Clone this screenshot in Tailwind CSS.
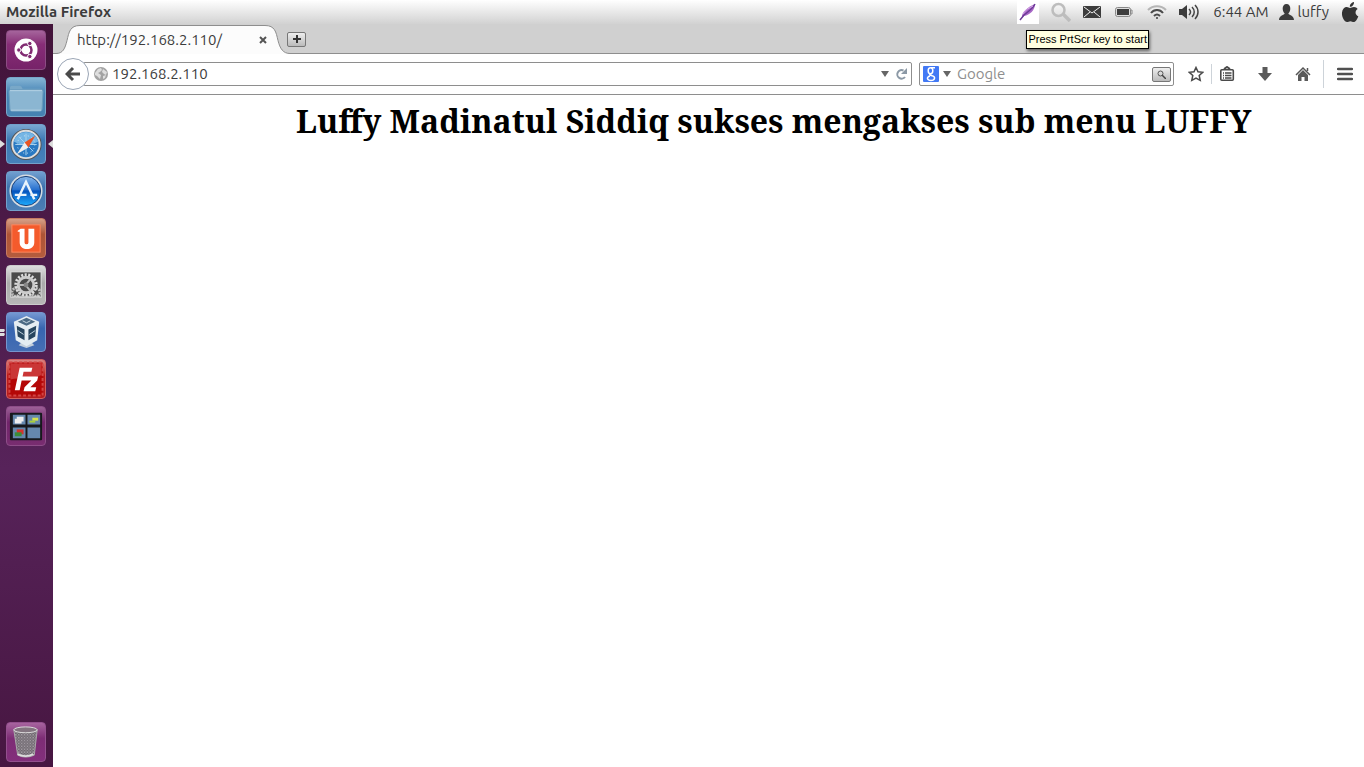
<!DOCTYPE html>
<html lang="en">
<head>
    <meta charset="utf-8">
    <title>http://192.168.2.110/</title>
    <script src="https://cdn.jsdelivr.net/npm/@tailwindcss/browser@4"></script>
</head>
<body class="flex h-screen flex-col overflow-hidden bg-white font-['Ubuntu','Open_Sans',sans-serif] text-[15px] leading-6 text-[#3c3c3c]">

    <!-- Top panel -->
    <header class="relative flex h-6 shrink-0 items-center justify-between bg-linear-to-b from-white to-[#d2d2d2] pr-[5px] pl-1.5">
        <span class="font-bold">Mozilla Firefox</span>
        <div class="flex h-6 items-center">
            <button type="button" aria-label="Screenshot" class="mr-3 h-6 w-[22px] bg-white">
                <svg class="h-6 w-[22px]" viewBox="0 0 22 24">
                    <path d="M5 18C4 12 11 7 18 4c0 6-5 11-11 12z" fill="#a868c6"/>
                    <path d="M3 20L7 15C11 12 16 8 18 4" stroke="#6b3a96" stroke-width="1.500" fill="none"/>
                    <path d="M6 14c2-4 6-6 10-8" stroke="#d6a9e8" fill="none"/>
                </svg>
            </button>
            <button type="button" aria-label="Search" class="mr-3">
                <svg class="size-5" viewBox="0 0 20 20" fill="none" stroke="#bdbdbd">
                    <circle cx="7.500" cy="8" r="6" stroke-width="2.500"/>
                    <path d="M12 12l7 7" stroke-width="3.500"/>
                </svg>
            </button>
            <button type="button" aria-label="Messages" class="mr-3.5">
                <svg class="h-3 w-[18px]" viewBox="0 0 18 12">
                    <rect width="18" height="12" rx="1" fill="#3c3c3c"/>
                    <path d="M1 1l8 6 8-6M1 11l6-5M17 11l-6-5" stroke="#eee" fill="none"/>
                </svg>
            </button>
            <button type="button" aria-label="Battery" class="mr-3.5">
                <svg class="h-2.5 w-[18px]" viewBox="0 0 18 10">
                    <rect x=".5" y=".5" width="15" height="9" rx="2" fill="#ddd" stroke="#888"/>
                    <rect x="2" y="2" width="12" height="6" fill="#3c3c3c"/>
                    <path d="M16 3h1v4h-1" stroke="#888" fill="none"/>
                </svg>
            </button>
            <button type="button" aria-label="Network" class="mr-3">
                <svg class="h-4 w-5" viewBox="0 0 20 16" fill="none" stroke-width="2">
                    <path d="M1 6c5-5 13-5 18 0" stroke="#b5b5b5"/>
                    <path d="M4 9c3-4 9-4 12 0M7 12c2-2 4-2 6 0" stroke="#4a4a4a"/>
                    <circle cx="10" cy="14" r="1" fill="#3c3c3c"/>
                </svg>
            </button>
            <button type="button" aria-label="Volume" class="mr-3.5">
                <svg class="h-4 w-5" viewBox="0 0 20 16">
                    <path d="M0 5h3l5-4v14l-5-4H0z" fill="#3c3c3c"/>
                    <path d="M10 5c2 2 2 4 0 6M13 3c3 3 3 7 0 10M16 1c4 4 4 10 0 14" fill="none" stroke="#444" stroke-width="1.500"/>
                </svg>
            </button>
            <span class="mr-2.5">6:44 AM</span>
            <svg class="mr-1 h-4 w-[15px]" viewBox="0 0 15 16" fill="#3c3c3c">
                <path d="M7.500 0C10 0 11.500 2 11.300 5c-.2 2-1 3.500-2 4.500.2 1.500 5.700 1.800 5.700 6.500H0c0-4.700 5.500-5 5.700-6.500-1-1-1.800-2.500-2-4.500C3.500 2 5 0 7.500 0z"/>
            </svg>
            <span class="mr-3">luffy</span>
            <svg class="h-5 w-[18px]" viewBox="0 0 18 20" fill="#333">
                <path d="M13 0c.2 2.500-1.800 5-4.200 4.800C8.600 2.500 10.700.3 13 0z"/>
                <path d="M9 6c1 0 2-1 4-1 1.500 0 2.900.8 3.700 2-3.200 2-2.600 6 .6 7.200C16.500 17 14.500 20 12.700 20c-1.300 0-1.800-.8-3.300-.8S7.300 20 6 20c-2.500 0-5.500-5-5-9.500C1.300 7 3.500 5 5.700 5 7.200 5 8 6 9 6z"/>
            </svg>
        </div>
        <div role="tooltip" class="absolute top-[30px] right-[215px] z-10 border border-black bg-[#ffffe1] px-px font-['Liberation_Sans',sans-serif] text-[11px] leading-[17px] whitespace-nowrap text-black shadow-[1px_2px_3px_#0008]">Press PrtScr key to start</div>
    </header>

    <div class="flex min-h-0 flex-1">
        <!-- Launcher -->
        <nav aria-label="Launcher" class="flex w-[53px] shrink-0 flex-col gap-[7px] bg-linear-to-b from-[#421339] via-[#57235a] via-60% to-[#471641] px-1.5 pt-1.5 pb-[5px]">
            <button type="button" aria-label="Dash home" class="size-10 rounded border border-[#8c4c83] bg-linear-to-b from-[#a5649c] via-[#872d77] via-35% to-[#772369]">
                <svg class="mx-auto size-6" viewBox="0 0 24 24">
                    <circle cx="12" cy="12" r="11.500" fill="#fff"/>
                    <circle cx="12" cy="12" r="5.500" fill="none" stroke="#812b72" stroke-width="2.500"/>
                    <path d="M12 12H4M12 12l4-7M12 12l4 7" stroke="#fff" stroke-width="1"/>
                    <g fill="#812b72" stroke="#fff"><circle cx="4.800" cy="12" r="2.200"/><circle cx="15.800" cy="5.500" r="2.200"/><circle cx="15.800" cy="18.500" r="2.200"/></g>
                </svg>
            </button>
            <button type="button" aria-label="Files" class="size-10 rounded border border-[#77a6c9] bg-linear-to-b from-[#85b5d5] via-[#4684b5] via-40% to-[#4682b2]">
                <svg class="size-[38px]" viewBox="0 0 39 39">
                    <path d="M3 10q0-2 2-2h8q2 0 3 3h18q2 0 2 2v5H3z" fill="#79a8c8"/>
                    <path d="M2 14q0-2 2-2h31q2 0 2 2l-1 18q0 2-2 2H5q-2 0-2-2z" fill="#8bb6d2" stroke="#6a9bbd"/>
                    <path d="M3 13h33M4 33h31" stroke="#b5d3e4"/>
                </svg>
            </button>
            <!-- the arrows mark the running, focused app -->
            <div class="-mx-1.5 flex items-center">
                <svg class="mr-px h-2 w-[5px]" viewBox="0 0 5 8"><path d="M0 0l5 4-5 4z" fill="#ddd"/></svg>
                <button type="button" aria-label="Browser" class="size-10 rounded border border-[#72a1cb] bg-linear-to-b from-[#79a7d1] via-[#3c79b4] via-40% to-[#4681b9]">
                    <svg class="size-[38px]" viewBox="0 0 39 39">
                        <circle cx="19.500" cy="20" r="14.500" fill="#347fc8" stroke="#555" stroke-width="3"/>
                        <circle cx="19.500" cy="20" r="14" fill="#2979c2" stroke="#ddd" stroke-width="2"/>
                        <path d="M7 17c4-13 21-13 25 0-8 5-17 5-25 0z" fill="#75b5e4"/>
                        <circle cx="19.500" cy="20" r="9" fill="none" stroke="#cde5f4" stroke-dasharray="1 3"/>
                        <path d="M19.500 9v22M8.500 20h22M12 12l15 15" stroke="#a9d4ef"/>
                        <path d="M29 11L22 23l-4-5z" fill="#e95421"/>
                        <path d="M10 30l8-12 4 5z" fill="#eee"/>
                    </svg>
                </button>
                <svg class="ml-auto h-2 w-[5px]" viewBox="0 0 5 8"><path d="M5 0L0 4l5 4z" fill="#ddd"/></svg>
            </div>
            <button type="button" aria-label="App store" class="size-10 rounded border border-[#72a1cb] bg-linear-to-b from-[#719fd0] via-[#3e73ad] via-40% to-[#4b7eb5]">
                <svg class="size-[38px]" viewBox="0 0 39 39">
                    <defs>
                        <linearGradient id="store" x2="0" y2="1">
                            <stop offset="0" stop-color="#8fbdec"/>
                            <stop offset=".45" stop-color="#2a72cf"/>
                            <stop offset=".5" stop-color="#0553bd"/>
                            <stop offset="1" stop-color="#22b0ff"/>
                        </linearGradient>
                    </defs>
                    <circle cx="19.500" cy="19.500" r="16" fill="url(#store)" stroke="#d6dce2" stroke-width="2"/>
                    <circle cx="19.500" cy="19.500" r="15" fill="none" stroke="#173d75"/>
                    <path d="M11 28l8.500-18L28 28M8 23.500h12M24 23.500h7" fill="none" stroke="#e9f3fc" stroke-width="2.500"/>
                </svg>
            </button>
            <button type="button" aria-label="Ubuntu One" class="size-10 rounded border border-[#c67a61] bg-linear-to-b from-[#d6a087] via-[#ae5436] via-40% to-[#b45c3d]">
                <svg class="size-[38px]" viewBox="0 0 39 39">
                    <rect x="5" y="6" width="29" height="28" fill="#f45b2c" stroke="#ff8960"/>
                    <path d="M11 12l3-2h4v14q0 2 2 2t2-2V10h6v14c0 9-15 9-15 0V13h-2z" fill="#fff"/>
                </svg>
            </button>
            <button type="button" aria-label="System settings" class="size-10 rounded border border-[#ccc] bg-linear-to-b from-[#ddd] via-[#aaa] via-45% to-[#b7b7b7]">
                <svg class="size-[38px]" viewBox="0 0 39 39">
                    <rect x="4" y="6" width="31" height="26" fill="#4b4b4b" stroke="#e4e4e4"/>
                    <g fill="none" stroke="#bbb">
                        <circle cx="9" cy="27" r="4" stroke-width="3" stroke-dasharray="2 1"/>
                        <circle cx="30" cy="27" r="4" stroke-width="3" stroke-dasharray="2 1"/>
                        <circle cx="19.500" cy="19.500" r="10" stroke="#ddd" stroke-width="4" stroke-dasharray="2 1.500"/>
                        <circle cx="19.500" cy="19.500" r="8" stroke="#ccc" stroke-width="3"/>
                        <path d="M12 19.500h7l5-6M19 19.500l5 6" stroke-width="2"/>
                    </g>
                    <circle cx="19.500" cy="19.500" r="2.500" fill="#888"/>
                    <path d="M5 31h29" stroke="#ddd"/>
                </svg>
            </button>
            <!-- two bars: two windows open -->
            <div class="-ml-1.5 flex items-center gap-px">
                <svg class="h-[7px] w-[5px]" viewBox="0 0 5 7"><path d="M0 0h4l1 1-1 2H0zM0 4h4l1 1-1 2H0z" fill="#ddd"/></svg>
                <button type="button" aria-label="VirtualBox" class="size-10 rounded border border-[#7595cd] bg-linear-to-b from-[#7598d2] via-[#3765af] via-40% to-[#456eb4]">
                    <svg class="size-[38px]" viewBox="0 0 39 39">
                        <path d="M15 30l5-2 5 2 3 3-8 3-8-3z" fill="#c4cfdb"/>
                        <path d="M20 3l13 6-2 19-11 6-11-6L7 9z" fill="#e5edf2"/>
                        <path d="M20 5l9 4-9 4-9-4z" fill="#4b6983"/>
                        <path d="M10 13l8 4v11l-7-4zM30 13l-8 4v11l7-4z" fill="#28465f"/>
                        <path d="M16 8l4 2 4-2M11 18l6 4M23 22l6-4" stroke="#c6d8e2" fill="none"/>
                    </svg>
                </button>
            </div>
            <button type="button" aria-label="FileZilla" class="size-10 rounded border border-[#d06060] bg-linear-to-b from-[#d88484] via-[#bd1a1a] via-40% to-[#b51e1e]">
                <svg class="size-[38px]" viewBox="0 0 39 39">
                    <rect x="2.500" y="2.500" width="34" height="34" fill="#b40707" stroke="#d24545" stroke-width="2" stroke-dasharray="3 2"/>
                    <path d="M3.500 3.500h32v12C27 20 13 18 3.500 20z" fill="#ca3636"/>
                    <path d="M8 31l5-23h13l-1 4h-8l-1 5h6l-1 4h-6l-2 10zM20 17h12l-1 4-7 7h6l-1 4H17l1-4 7-7h-6z" fill="#fff"/>
                </svg>
            </button>
            <button type="button" aria-label="Workspace switcher" class="size-10 rounded border border-[#8d4d88] bg-linear-to-b from-[#9c6097] via-[#71246b] via-40% to-[#782d70]">
                <svg class="size-[38px]" viewBox="0 0 39 39">
                    <rect x="3" y="6" width="33" height="28" rx="1" fill="#17191c"/>
                    <path d="M6 8h13v10H6zM21 8h13v10H21zM6 21h13v11H6zM21 21h13v11H21z" fill="#6588ad"/>
                    <path d="M8 12h7v5H8zM10 10h7v5h-7z" fill="#eee"/>
                    <path d="M26 11h6v3h-6z" fill="#d6e34c"/>
                    <path d="M23 14h6v2h-6z" fill="#a7cf3a"/>
                    <path d="M10 23h7v5h-7z" fill="#d3352c"/>
                    <path d="M8 26h7v4H8z" fill="#398e38"/>
                </svg>
            </button>
            <button type="button" aria-label="Trash" class="mt-auto size-10 rounded border border-[#934f8d] bg-linear-to-b from-[#a7649f] via-[#7d2d75] via-40% to-[#832f7b]">
                <svg class="size-[38px]" viewBox="0 0 39 39">
                    <defs>
                        <pattern id="mesh" width="3" height="3" patternUnits="userSpaceOnUse">
                            <rect width="3" height="3" fill="#5c555d"/>
                            <path d="M0 0l3 3M3 0L0 3" stroke="#b0aab0" stroke-width=".8"/>
                        </pattern>
                    </defs>
                    <path d="M7 7l4 26q8 4 17 0l3-26z" fill="url(#mesh)" stroke="#aaa"/>
                    <ellipse cx="19" cy="7" rx="12" ry="3" fill="#837580" stroke="#ddd"/>
                    <path d="M11 32q8 4 16 0" stroke="#ddd" stroke-width="2" fill="none"/>
                </svg>
            </button>
        </nav>

        <!-- Browser window -->
        <div class="flex min-w-0 flex-1 flex-col">
            <div class="flex h-[30px] shrink-0 items-center bg-[#d0d0d0] shadow-[inset_0_-1px_#8e8e8e]">
                <div class="relative flex h-[30px] w-[234px] items-center justify-between pt-0.5 pr-5 pl-6">
                    <svg class="absolute inset-0 h-[30px] w-[240px]" viewBox="0 0 240 30">
                        <path d="M0 29.500h3c7 0 9-5 11-13C16 8 17 1.500 27 1.500h185c10 0 11 6.500 13 15 2 8 5 13 12 13V30H0z" fill="#fcfcfc"/>
                        <path d="M0 29.500h3c7 0 9-5 11-13C16 8 17 1.500 27 1.500h185c10 0 11 6.500 13 15 2 8 5 13 12 13h3" fill="none" stroke="#8e8e8e"/>
                    </svg>
                    <span class="relative">http://192.168.2.110/</span>
                    <button type="button" aria-label="Close tab" class="relative">
                        <svg class="size-2" viewBox="0 0 8 8"><path d="M1 1l6 6M7 1L1 7" stroke="#555" stroke-width="2"/></svg>
                    </button>
                </div>
                <button type="button" aria-label="New tab" class="relative flex h-[15px] w-[19px] items-center justify-center rounded-xs border border-[#777] bg-linear-to-b from-[#eee] to-[#bbb]">
                    <svg class="size-2" viewBox="0 0 8 8"><path d="M4 0v8M0 4h8" stroke="#333" stroke-width="2"/></svg>
                </button>
            </div>

            <div class="flex h-[41px] shrink-0 items-center border-b border-[#8e8e8e] bg-white pr-[11px] pl-1">
                <button type="button" aria-label="Back" class="z-10 -mr-1.5 flex size-8 shrink-0 items-center justify-center rounded-full border border-[#9aa5b5] bg-white">
                    <svg class="size-4" viewBox="0 0 16 16"><path d="M8 2L2 8l6 6M2 8h13" fill="none" stroke="#4a4a4a" stroke-width="3"/></svg>
                </button>
                <div class="mr-[7px] flex h-6 min-w-0 flex-1 items-center rounded-xs border border-[#8e8e8e] bg-white pr-1 pl-2.5">
                    <svg class="mr-1 size-3.5 shrink-0" viewBox="0 0 14 14">
                        <circle cx="7" cy="7" r="7" fill="#a3a3a3"/>
                        <path d="M1 6l3-4 3-1 1 2-2 2-2 1 3 2-1 4-3-3-2-1zM9 2l4 3-1 3-2-1-2-2zM9 9l3-1-1 3-2 1z" fill="#dedede"/>
                    </svg>
                    <input aria-label="Address" type="text" value="192.168.2.110" class="h-6 min-w-0 flex-1 outline-none">
                    <button type="button" aria-label="History" class="mr-1.5">
                        <svg class="h-1.5 w-2" viewBox="0 0 8 6"><path d="M0 0h8L4 6z" fill="#666"/></svg>
                    </button>
                    <button type="button" aria-label="Reload">
                        <svg class="size-3" viewBox="0 0 12 12"><path d="M8.500 2.500A4.300 4.300 0 1 0 10 9" fill="none" stroke="#8c99a6" stroke-width="2"/><path d="M12 0v6H6z" fill="#8c99a6"/></svg>
                    </button>
                </div>
                <div class="mr-3.5 flex h-6 w-[255px] shrink-0 items-center rounded-xs border border-[#8e8e8e] bg-white pr-0.5 pl-[3px]">
                    <button type="button" aria-label="Search engine" class="mr-1.5 flex items-center gap-1">
                        <svg class="size-4" viewBox="0 0 16 16">
                            <rect width="16" height="16" rx="1" fill="#4279f5"/>
                            <g fill="none" stroke="#fff" stroke-width="1.500"><ellipse cx="7.500" cy="4.800" rx="2.300" ry="3"/><path d="M8 1.800h4M9 7.500c-3 0-3 2 0 2.300 4 .7 3 4.700-1 4.700s-5-3.500-1-4.500"/></g>
                        </svg>
                        <svg class="h-1.5 w-2" viewBox="0 0 8 6"><path d="M0 0h8L4 6z" fill="#666"/></svg>
                    </button>
                    <input aria-label="Search" type="text" placeholder="Google" class="h-6 min-w-0 flex-1 outline-none placeholder:text-[#8e8e8e]">
                    <button type="button" aria-label="Go" class="flex h-[15px] w-[19px] items-center justify-center rounded-xs border border-[#777] bg-linear-to-b from-[#eee] to-[#bbb]">
                        <svg class="size-[9px]" viewBox="0 0 9 9"><circle cx="3.500" cy="3.500" r="2.500" fill="none" stroke="#555"/><path d="M5 5l4 4" stroke="#444" stroke-width="1.500"/></svg>
                    </button>
                </div>
                <button type="button" aria-label="Bookmark" class="mr-[7px] shrink-0">
                    <svg class="size-4" viewBox="0 0 16 16"><path d="M8 1.500l2 4.300 4.700.5-3.500 3.200 1 4.800L8 12l-4.200 2.300 1-4.800-3.500-3.200 4.700-.5z" fill="none" stroke="#4a4a4a" stroke-width="1.500"/></svg>
                </button>
                <div class="mr-[7px] h-5 w-px bg-[#cdd3d9]"></div>
                <button type="button" aria-label="Bookmarks menu" class="mr-[22px] shrink-0">
                    <svg class="size-4" viewBox="0 0 16 16">
                        <path d="M5 3l3-2 3 2" fill="none" stroke="#4a4a4a" stroke-width="2"/>
                        <rect x="1.800" y="3.800" width="12.500" height="10.500" rx="1" fill="#fff" stroke="#4a4a4a" stroke-width="1.600"/>
                        <path d="M4 7h1M4 9.500h1M4 12h1M6 7h6.500M6 9.500h6.500M6 12h6.500" stroke="#4a4a4a" stroke-width="1.300"/>
                    </svg>
                </button>
                <button type="button" aria-label="Downloads" class="mr-[22px] shrink-0">
                    <svg class="size-4" viewBox="0 0 16 16"><path d="M5.500 1h5v6H15l-7 8-7-8h4.500z" fill="#5a5a5a"/></svg>
                </button>
                <button type="button" aria-label="Home" class="mr-3 shrink-0">
                    <svg class="size-4" viewBox="0 0 16 16"><path d="M1 9l7-7 7 7M12.500 5V2" fill="none" stroke="#555" stroke-width="1.500"/><path d="M3 9l5-5 5 5v6H9.500v-4h-3v4H3z" fill="#5a5a5a"/></svg>
                </button>
                <div class="mr-[13px] h-7 w-px bg-[#cdd3d9]"></div>
                <button type="button" aria-label="Menu" class="shrink-0">
                    <svg class="size-4" viewBox="0 0 16 16"><path d="M1 3h14M1 8h14M1 13h14" stroke="#505050" stroke-width="2.500" stroke-linecap="round"/></svg>
                </button>
            </div>

            <main class="flex-1 pt-1 pl-[243px]">
                <h1 class="font-['Noto_Serif','Droid_Serif','Liberation_Serif',serif] text-[32px] leading-[44px] font-bold whitespace-nowrap text-black">Luffy Madinatul Siddiq sukses mengakses sub menu LUFFY</h1>
            </main>
        </div>
    </div>
</body>
</html>
